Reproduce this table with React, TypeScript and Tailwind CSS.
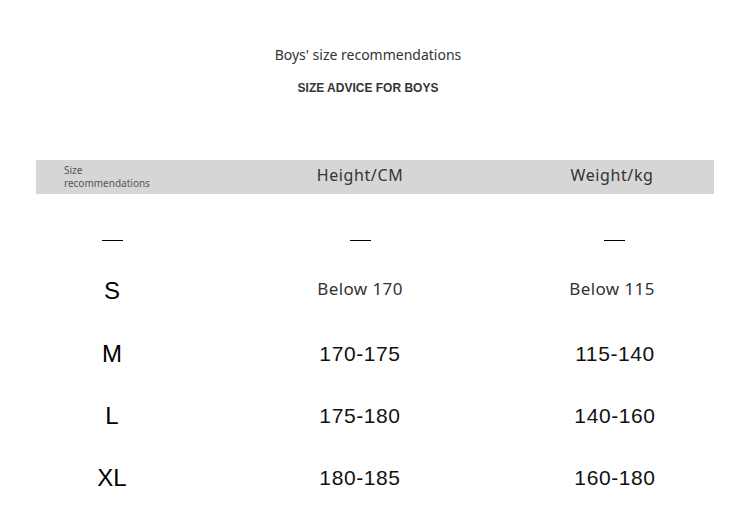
const rows = [
  { size: "S", h: "Below 170", w: "Below 115", soft: true },
  { size: "M", h: "170-175", w: "115-140" },
  { size: "L", h: "175-180", w: "140-160" },
  { size: "XL", h: "180-185", w: "160-180" },
];

export default function App() {
  return (
    <div className="w-[750px] h-[532px] bg-white overflow-hidden font-['Noto_Sans',sans-serif]">
      {/* Title */}
      <div className="pt-[45px] pr-[14px] flex flex-col items-center">
        <div className="text-[14px] leading-[20px] text-[#333]">Boys' size recommendations</div>
        <div className="mt-[16px] text-[12px] leading-[14px] font-bold text-[#333] font-['Liberation_Sans',Arial,sans-serif]">
          SIZE ADVICE FOR BOYS
        </div>
      </div>

      {/* Table */}
      <div className="mt-[65px] mx-[36px] w-[678px]">
        <div className="h-[34px] bg-[#d6d6d6] grid grid-cols-[152px_344px_160px] items-center">
          <div className="pl-[28px] text-[10px] leading-[13px] text-[#555]">
            <div>Size</div>
            <div>recommendations</div>
          </div>
          <div className="text-center text-[16px] tracking-[0.6px] text-[#333] -mt-[4px]">Height/CM</div>
          <div className="text-center text-[16px] tracking-[0.6px] text-[#333] -mt-[4px]">Weight/kg</div>
        </div>

        <div className="mt-[21px] h-[50px] grid grid-cols-[152px_344px_160px] items-center">
          <div className="flex justify-center">
            <div className="w-[21px] h-px bg-black" />
          </div>
          <div className="flex justify-center">
            <div className="w-[21px] h-px bg-black" />
          </div>
          <div className="flex justify-center pl-[4px]">
            <div className="w-[21px] h-px bg-black" />
          </div>
        </div>

        {rows.map((r, i) => (
          <div
            key={r.size}
            className={`grid grid-cols-[152px_344px_160px] items-center ${i === 0 ? "h-[52px]" : "h-[62px]"} ${i === 1 ? "mt-[6px]" : ""}`}
          >
            <div className="text-center text-[24px] text-black font-['Liberation_Sans',Arial,sans-serif]">{r.size}</div>
            {r.soft ? (
              <>
                <div className="text-center text-[17px] tracking-[0.4px] text-[#333] -mt-[4px]">{r.h}</div>
                <div className="text-center text-[17px] tracking-[0.4px] text-[#333] -mt-[4px]">{r.w}</div>
              </>
            ) : (
              <>
                <div className="text-center text-[21px] tracking-[0.6px] text-[#111] font-['Liberation_Sans',Arial,sans-serif]">{r.h}</div>
                <div className="text-center text-[21px] tracking-[0.6px] text-[#111] pl-[6px] font-['Liberation_Sans',Arial,sans-serif]">{r.w}</div>
              </>
            )}
          </div>
        ))}
      </div>
    </div>
  );
}
